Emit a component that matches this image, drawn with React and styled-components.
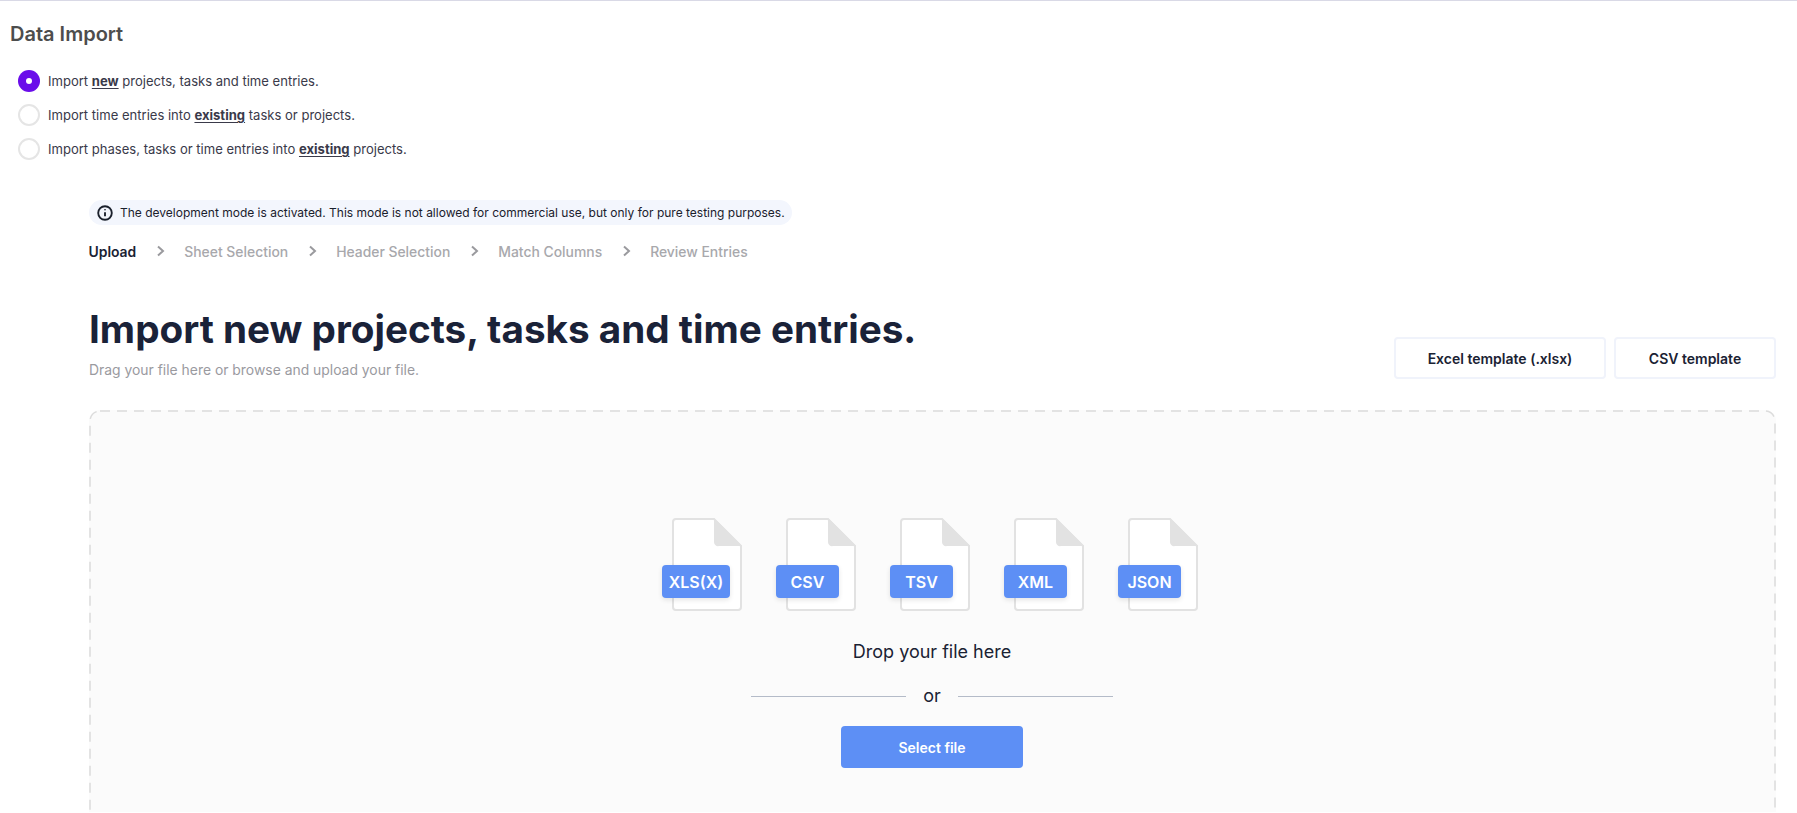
import React from "react";
import styled, { createGlobalStyle } from "styled-components";

const Global = createGlobalStyle`
  html, body { margin: 0; padding: 0; background: #fff; height: 100%; overflow: hidden; }
  body { font-family: Inter, "Liberation Sans", sans-serif; }
`;

const Page = styled.div`
  border-top: 1px solid #d9d9e6;
  height: 812px;
  overflow: hidden;
  box-sizing: border-box;
`;
const Title = styled.h1`
  margin: 0;
  padding: 21px 0 0 10px;
  font-size: 20px;
  line-height: 24px;
  font-weight: 600;
  color: #4d4d4d;
`;
const RadioList = styled.div`
  display: flex;
  flex-direction: column;
  gap: 12px;
  padding: 24px 0 0 18px;
`;
const RadioRow = styled.label`
  display: flex;
  align-items: center;
  gap: 8px;
  height: 22px;
  font-size: 13.05px;
  color: #3a3a4a;
  b { font-weight: 700; text-decoration: underline; text-underline-offset: 2px; }
`;
const RadioDot = styled.span`
  box-sizing: border-box;
  width: 22px;
  height: 22px;
  border-radius: 50%;
  display: flex;
  align-items: center;
  justify-content: center;
  background: ${(p) => (p.$on ? "#6a0dea" : "#fff")};
  border: ${(p) => (p.$on ? "none" : "2px solid #e5e5e5")};
  &::after {
    content: "";
    display: ${(p) => (p.$on ? "block" : "none")};
    width: 6px;
    height: 6px;
    border-radius: 50%;
    background: #fff;
  }
`;
const Main = styled.div`
  margin: 0 21px 0 89px;
  padding-top: 40px;
`;
const Notice = styled.div`
  display: inline-flex;
  align-items: center;
  gap: 7px;
  height: 25px;
  padding: 0 7px 0 8px;
  border-radius: 13px;
  background: #f3f6fd;
  font-size: 12px;
  color: #1a202c;
`;
const Steps = styled.div`
  display: flex;
  align-items: center;
  margin: 14px 0 0 -0.5px;
  height: 25px;
  font-size: 13.9px;
`;
const Step = styled.span`
  color: ${(p) => (p.$on ? "#1a2233" : "#a8a8ac")};
  font-weight: ${(p) => (p.$on ? 600 : 500)};
`;
const Chevron = styled.svg`
  width: 14px;
  height: 14px;
  margin: -2px 17px 0 17px;
  color: #9a9a9e;
  fill: none;
  stroke: currentColor;
  stroke-width: 2;
`;
const Head = styled.div`
  display: flex;
  justify-content: space-between;
  align-items: flex-end;
  margin-top: 41px;
`;
const Heading = styled.h2`
  margin: 0;
  font-size: 38.66px;
  line-height: 48px;
  font-weight: 700;
  color: #1a2238;
`;
const Sub = styled.p`
  margin: 7px 0 0;
  font-size: 13.9px;
  line-height: 20px;
  color: #9a9a9f;
`;
const Actions = styled.div`
  display: flex;
  gap: 8px;
  margin-bottom: 1px;
`;
const OutlineBtn = styled.button`
  box-sizing: border-box;
  width: ${(p) => p.$w}px;
  height: 42px;
  background: #fff;
  border: 2px solid #f0f3fb;
  border-radius: 4px;
  font: 600 14px Inter, sans-serif;
  color: #1a2233;
`;
const Drop = styled.div`
  position: relative;
  box-sizing: border-box;
  margin-top: 30px;
  height: 500px;
  border-radius: 10px;
  background: #fbfbfb;
  display: flex;
  flex-direction: column;
  align-items: center;
  padding: 108px 1px 0 0;
`;
const DashedEdge = styled.svg`
  position: absolute;
  inset: 0;
  width: 100%;
  height: 100%;
  pointer-events: none;
  rect {
    fill: none;
    stroke: #dcdcdc;
    stroke-width: 1.5;
    stroke-dasharray: 10 7;
  }
`;
const Files = styled.div`
  display: flex;
  gap: 34px;
  margin-right: 4px;
`;
const FileBox = styled.div`
  position: relative;
  width: 80px;
  height: 95px;
`;
const FileTag = styled.span`
  position: absolute;
  left: 0;
  top: 47px;
  width: ${(p) => p.$w}px;
  height: 33px;
  display: flex;
  align-items: center;
  justify-content: center;
  background: #5d8ff5;
  border-radius: 4px;
  box-shadow: 0 2px 5px rgba(0, 0, 0, 0.1);
  color: #fff;
  font-size: 16px;
  font-weight: 600;
`;
const DropText = styled.div`
  margin-top: 27px;
  font-size: 18px;
  line-height: 24px;
  color: #1a2233;
`;
const OrRow = styled.div`
  display: flex;
  align-items: center;
  gap: 17px;
  margin-top: 20px;
  font-size: 18px;
  line-height: 24px;
  color: #1a2233;
  &::before, &::after {
    content: "";
    width: 155px;
    height: 1px;
    background: #b4bbc8;
  }
`;
const Primary = styled.button`
  margin-top: 18px;
  width: 182px;
  height: 42px;
  border: none;
  border-radius: 4px;
  background: #5d8ff5;
  color: #fff;
  font: 600 14px Inter, sans-serif;
`;

const FileIcon = () => (
  <svg width="80" height="95" viewBox="0 0 80 95">
    <path d="M15 1 H52 L79 28 V89 a3 3 0 0 1 -3 3 H14 a3 3 0 0 1 -3 -3 V4 a3 3 0 0 1 3 -3z" fill="#fff" stroke="#e2e2e2" strokeWidth="2" />
    <path d="M52 0 L80 28 H57 a4 4 0 0 1 -5 -4z" fill="#e2e2e2" />
  </svg>
);

const files = [
  ["XLS(X)", 68],
  ["CSV", 63],
  ["TSV", 63],
  ["XML", 63],
  ["JSON", 63],
];

export default function App() {
  return (
    <Page>
      <Global />
      <Title>Data Import</Title>
      <RadioList>
        <RadioRow><RadioDot $on /><span>Import <b>new</b> projects, tasks and time entries.</span></RadioRow>
        <RadioRow><RadioDot /><span>Import time entries into <b>existing</b> tasks or projects.</span></RadioRow>
        <RadioRow><RadioDot /><span>Import phases, tasks or time entries into <b>existing</b> projects.</span></RadioRow>
      </RadioList>
      <Main>
        <Notice>
          <svg width="16" height="16" viewBox="0 0 24 24" fill="none" stroke="#1a202c" strokeWidth="2.8">
            <circle cx="12" cy="12" r="10.2" />
            <path d="M12 17v-6M12 6.5v1.5" />
          </svg>
          The development mode is activated. This mode is not allowed for commercial use, but only for pure testing purposes.
        </Notice>
        <Steps>
          {["Upload", "Sheet Selection", "Header Selection", "Match Columns", "Review Entries"].map((s, i) => (
            <React.Fragment key={s}>
              {i > 0 && <Chevron viewBox="0 0 14 14"><path d="M5 2.5 L10 7 L5 11.5" /></Chevron>}
              <Step $on={i === 0}>{s}</Step>
            </React.Fragment>
          ))}
        </Steps>
        <Head>
          <div>
            <Heading>Import new projects, tasks and time entries.</Heading>
            <Sub>Drag your file here or browse and upload your file.</Sub>
          </div>
          <Actions>
            <OutlineBtn $w={212}>Excel template (.xlsx)</OutlineBtn>
            <OutlineBtn $w={162}>CSV template</OutlineBtn>
          </Actions>
        </Head>
        <Drop>
          <DashedEdge><rect x="1" y="1" width="calc(100% - 2px)" height="calc(100% - 2px)" rx="10" /></DashedEdge>
          <Files>
            {files.map(([t, w]) => (
              <FileBox key={t}>
                <FileIcon />
                <FileTag $w={w}>{t}</FileTag>
              </FileBox>
            ))}
          </Files>
          <DropText>Drop your file here</DropText>
          <OrRow>or</OrRow>
          <Primary>Select file</Primary>
        </Drop>
      </Main>
    </Page>
  );
}
